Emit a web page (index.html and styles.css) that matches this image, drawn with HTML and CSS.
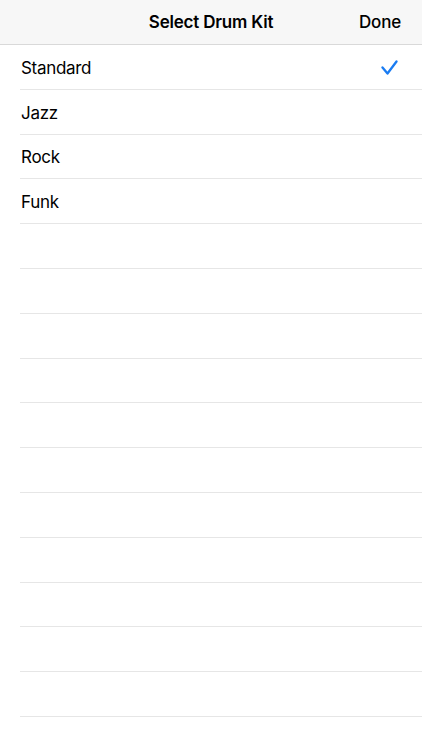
FILE: index.html
```html
<!DOCTYPE html>
<html>
<head>
<meta charset="utf-8">
<link rel="stylesheet" href="styles.css">
</head>
<body>
<div class="navbar">
  <div class="title">Select Drum Kit</div>
  <div class="done">Done</div>
</div>
<ul class="list">
  <li class="row"><span class="label">Standard</span>
    <svg class="check" width="17" height="16" viewBox="0 0 17 16"><path d="M1.5 7.5 L6.5 13.5 L15.5 1.5" fill="none" stroke="#1a7cf2" stroke-width="2.3" stroke-linecap="round" stroke-linejoin="round"/></svg>
  </li>
  <li class="row"><span class="label">Jazz</span></li>
  <li class="row"><span class="label">Rock</span></li>
  <li class="row"><span class="label">Funk</span></li>
  <li class="row"></li>
  <li class="row"></li>
  <li class="row"></li>
  <li class="row"></li>
  <li class="row"></li>
  <li class="row"></li>
  <li class="row"></li>
  <li class="row"></li>
  <li class="row"></li>
  <li class="row"></li>
  <li class="row"></li>
  <li class="row"></li>
</ul>
</body>
</html>
```
FILE: styles.css
```css
html, body {
  margin: 0;
  padding: 0;
  background: #ffffff;
  font-family: Inter, "Liberation Sans", Arial, sans-serif;
  color: #000;
  overflow: hidden;
}
.navbar {
  position: relative;
  height: 45px;
  box-sizing: border-box;
  background: #f7f7f7;
  border-bottom: 1px solid #d9d9d9;
  display: flex;
  align-items: center;
  justify-content: center;
}
.title {
  font-size: 17px;
  font-weight: 600;
  letter-spacing: -0.2px;
}
.done {
  position: absolute;
  right: 21px;
  top: 0;
  height: 44px;
  display: flex;
  align-items: center;
  font-size: 17px;
  font-weight: 500;
  letter-spacing: -0.2px;
}
.list {
  list-style: none;
  margin: 0;
  padding: 0 0 0 20px;
}
.row {
  height: 44.8px;
  box-sizing: border-box;
  border-bottom: 1px solid #e6e6e6;
  display: flex;
  align-items: center;
  justify-content: space-between;
  padding: 2px 24px 0 1px;
}
.label {
  font-size: 17px;
  letter-spacing: -0.3px;
}
.check {
  display: block;
}
```
